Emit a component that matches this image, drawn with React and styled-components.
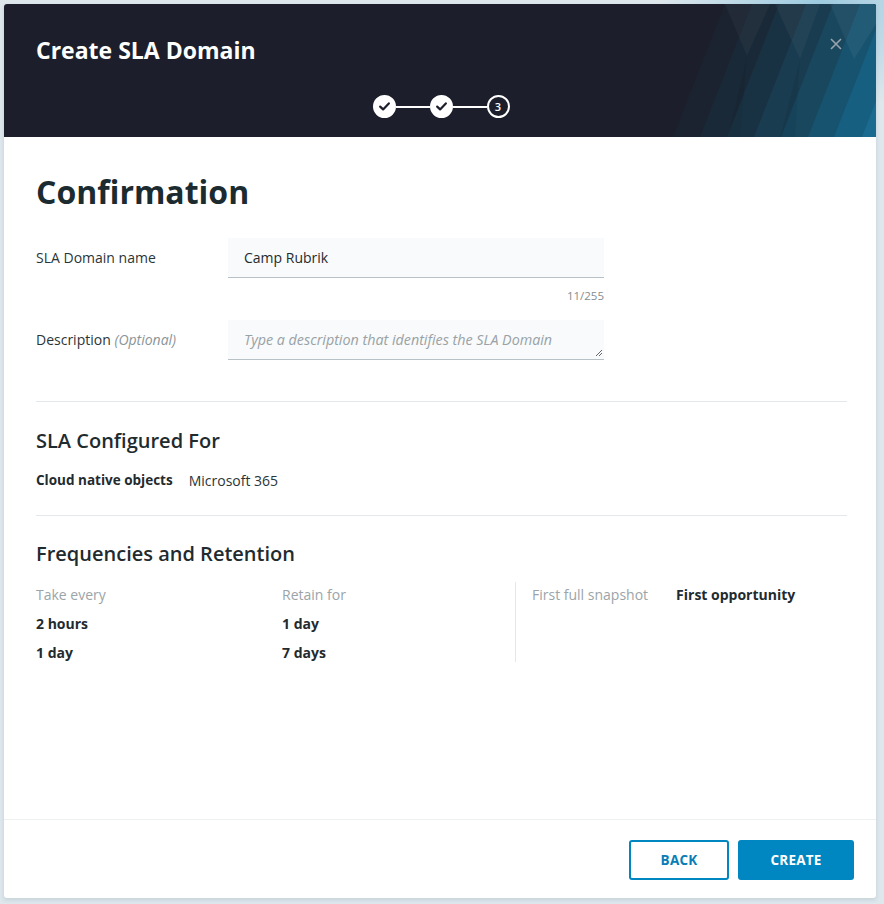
import React from "react";
import styled, { createGlobalStyle } from "styled-components";

const Global = createGlobalStyle`
  html, body { margin: 0; padding: 0; background: #dde7ec; }
  body { font-family: "Open Sans", "Noto Sans", sans-serif; color: #1f2b2f; }
  * { box-sizing: border-box; }
`;

const Page = styled.div`
  width: 884px;
  height: 904px;
  padding: 4px 8px 6px 4px;
  background:
    radial-gradient(ellipse 160px 110px at 820px 0px, #9dcbe0 0%, rgba(157, 203, 224, 0) 100%),
    #dde7ec;
`;

const Modal = styled.div`
  width: 872px;
  height: 894px;
  background: #fff;
  border-radius: 3px;
  overflow: hidden;
  display: flex;
  flex-direction: column;
  box-shadow: 0 2px 4px rgba(30, 60, 80, 0.12);
`;

const Header = styled.div`
  position: relative;
  height: 133px;
  background: #1c1f2b;
  padding: 30px 32px 0 32px;
  overflow: hidden;
  flex-shrink: 0;
`;

const Title = styled.h1`
  position: relative;
  margin: 0;
  font-size: 23px;
  font-weight: 700;
  color: #fff;
  line-height: 32px;
`;

const Stripes = styled.svg`
  position: absolute;
  right: 0;
  top: 0;
  width: 206px;
  height: 133px;
`;

const Close = styled.button`
  position: absolute;
  top: 32px;
  right: 32px;
  width: 16px;
  height: 16px;
  padding: 0;
  border: 0;
  background: transparent;
  cursor: pointer;
  display: flex;
  align-items: center;
  justify-content: center;
`;

const Stepper = styled.div`
  position: relative;
  display: flex;
  align-items: center;
  justify-content: center;
  margin-top: 29px;
  margin-left: 2px;
`;

const StepDot = styled.div`
  width: 23px;
  height: 23px;
  border-radius: 50%;
  display: flex;
  align-items: center;
  justify-content: center;
  background: ${(p) => (p.$done ? "#fff" : "transparent")};
  border: 2px solid #fff;
  color: #fff;
  font-size: 11px;
  font-weight: 600;
  line-height: 1;
`;

const StepLine = styled.div`
  width: 34px;
  height: 2px;
  background: #fff;
`;

const Body = styled.div`
  flex: 1;
  padding: 34px 29px 0 32px;
`;

const Heading = styled.h2`
  margin: 0 0 25px 0;
  font-size: 32px;
  font-weight: 700;
  color: #1b2b2f;
  line-height: 42px;
`;

const FieldRow = styled.div`
  display: grid;
  grid-template-columns: 192px 376px;
  align-items: start;
  margin-top: ${(p) => p.$mt || 0}px;
  margin-bottom: ${(p) => p.$mb || 0}px;
`;

const Label = styled.div`
  font-size: 14px;
  color: #2a3538;
  padding-top: ${(p) => p.$pt || 11}px;
  line-height: 19px;
`;

const Optional = styled.span`
  font-style: italic;
  color: #8a9599;
`;

const InputBox = styled.div`
  height: 40px;
  background: #f8fafb;
  border-bottom: 1px solid #b8c2c6;
  padding: 0 16px;
  display: flex;
  align-items: center;
  font-size: ${(p) => (p.$placeholder ? 14.3 : 14)}px;
  color: ${(p) => (p.$placeholder ? "#99a2a6" : "#1f2b2f")};
  font-style: ${(p) => (p.$placeholder ? "italic" : "normal")};
  position: relative;
`;

const Grip = styled.svg`
  position: absolute;
  right: 1px;
  bottom: 2px;
`;

const Counter = styled.div`
  text-align: right;
  font-size: 11.5px;
  color: #838d91;
  margin-top: 10px;
  line-height: 16px;
`;

const Divider = styled.div`
  height: 1px;
  width: 811px;
  background: #e4e8ea;
  margin-top: ${(p) => p.$mt}px;
  margin-bottom: ${(p) => p.$mb}px;
`;

const Section = styled.h3`
  margin: 0;
  font-size: 20px;
  font-weight: 600;
  color: #1f2b2f;
  line-height: 27px;
`;

const InfoRow = styled.div`
  display: flex;
  gap: 16px;
  margin-top: 17px;
  font-size: 14px;
  line-height: 19px;
`;

const Bold = styled.span`
  font-weight: 700;
  font-size: 13.5px;
  color: #1f2b2f;
`;

const Plain = styled.span`
  color: #2a3538;
`;

const FreqGrid = styled.div`
  display: grid;
  grid-template-columns: 246px 233px 1px 1fr;
  margin-top: 15px;
`;

const Col = styled.div`
  display: flex;
  flex-direction: column;
  gap: 10px;
  padding-top: 3px;
`;

const VLine = styled.div`
  background: #e4e8ea;
  height: 80px;
`;

const SnapCol = styled.div`
  display: flex;
  gap: 28px;
  padding: 3px 0 0 16px;
`;

const Muted = styled.div`
  font-size: 14px;
  color: #9ba4a8;
  line-height: 19px;
`;

const Val = styled.div`
  font-size: 14px;
  font-weight: 700;
  color: #1f2b2f;
  line-height: 19px;
`;

const Footer = styled.div`
  height: 79px;
  border-top: 1px solid #eef1f2;
  display: flex;
  justify-content: flex-end;
  align-items: flex-start;
  gap: 9px;
  padding: 20px 22px 0 0;
  flex-shrink: 0;
`;

const Button = styled.button`
  height: 40px;
  width: ${(p) => p.$w}px;
  border-radius: 3px;
  border: 2px solid #0086c1;
  background: ${(p) => (p.$primary ? "#0086c1" : "#fff")};
  color: ${(p) => (p.$primary ? "#fff" : "#0a7db5")};
  font-family: "Open Sans", sans-serif;
  font-size: 13.5px;
  font-weight: 700;
  letter-spacing: 0.2px;
  cursor: pointer;
`;

const Check = () => (
  <svg width="11" height="9" viewBox="0 0 11 9">
    <path d="M1.2 4.6 L4.1 7.4 L9.8 1.4" fill="none" stroke="#1c1f2b" strokeWidth="2.2" strokeLinecap="round" strokeLinejoin="round" />
  </svg>
);

const stripeColors = ["#1b2330", "#1a2937", "#193243", "#193c50", "#18475e", "#17536f", "#165f80", "#1a6b8f"];
const stripeStarts = [3, 30, 57, 84, 111, 138, 164, 192];

export default function App() {
  return (
    <>
      <Global />
      <Page>
        <Modal>
          <Header>
            <Stripes viewBox="0 0 206 133" preserveAspectRatio="none">
              {stripeStarts.map((a, i) => (
                <polygon key={i} points={`${a},133 ${a + 52},0 260,0 260,133`} fill={stripeColors[i]} />
              ))}
              <polygon points="55,0 77,52 100,0" fill="#ffffff" opacity="0.035" />
              <polygon points="105,0 130,55 150,0" fill="#ffffff" opacity="0.04" />
              <polygon points="160,0 184,55 206,20 206,0" fill="#ffffff" opacity="0.05" />
              <polygon points="77,52 58,133 70,133" fill="#000000" opacity="0.06" />
              <polygon points="130,55 110,133 125,133" fill="#000000" opacity="0.05" />
            </Stripes>
            <Title>Create SLA Domain</Title>
            <Close aria-label="Close">
              <svg width="12" height="12" viewBox="0 0 12 12">
                <path d="M1 1 L11 11 M11 1 L1 11" stroke="#9aa3ad" strokeWidth="1.6" />
              </svg>
            </Close>
            <Stepper>
              <StepDot $done><Check /></StepDot>
              <StepLine />
              <StepDot $done><Check /></StepDot>
              <StepLine />
              <StepDot>3</StepDot>
            </Stepper>
          </Header>
          <Body>
            <Heading>Confirmation</Heading>
            <FieldRow>
              <Label $pt={10}>SLA Domain name</Label>
              <div>
                <InputBox>Camp Rubrik</InputBox>
                <Counter>11/255</Counter>
              </div>
            </FieldRow>
            <FieldRow $mt={16} $mb={41}>
              <Label $pt={10}>
                Description <Optional>(Optional)</Optional>
              </Label>
              <InputBox $placeholder>
                Type a description that identifies the SLA Domain
                <Grip width="8" height="8" viewBox="0 0 8 8">
                  <path d="M7 1 L1 7 M7 4 L4 7" stroke="#555" strokeWidth="0.9" />
                </Grip>
              </InputBox>
            </FieldRow>
            <Divider $mt={0} $mb={25} />
            <Section>SLA Configured For</Section>
            <InfoRow>
              <Bold>Cloud native objects</Bold>
              <Plain>Microsoft 365</Plain>
            </InfoRow>
            <Divider $mt={25} $mb={24} />
            <Section>Frequencies and Retention</Section>
            <FreqGrid>
              <Col>
                <Muted>Take every</Muted>
                <Val>2 hours</Val>
                <Val>1 day</Val>
              </Col>
              <Col>
                <Muted>Retain for</Muted>
                <Val>1 day</Val>
                <Val>7 days</Val>
              </Col>
              <VLine />
              <SnapCol>
                <Muted>First full snapshot</Muted>
                <Val>First opportunity</Val>
              </SnapCol>
            </FreqGrid>
          </Body>
          <Footer>
            <Button $w={100}>BACK</Button>
            <Button $primary $w={116}>CREATE</Button>
          </Footer>
        </Modal>
      </Page>
    </>
  );
}
